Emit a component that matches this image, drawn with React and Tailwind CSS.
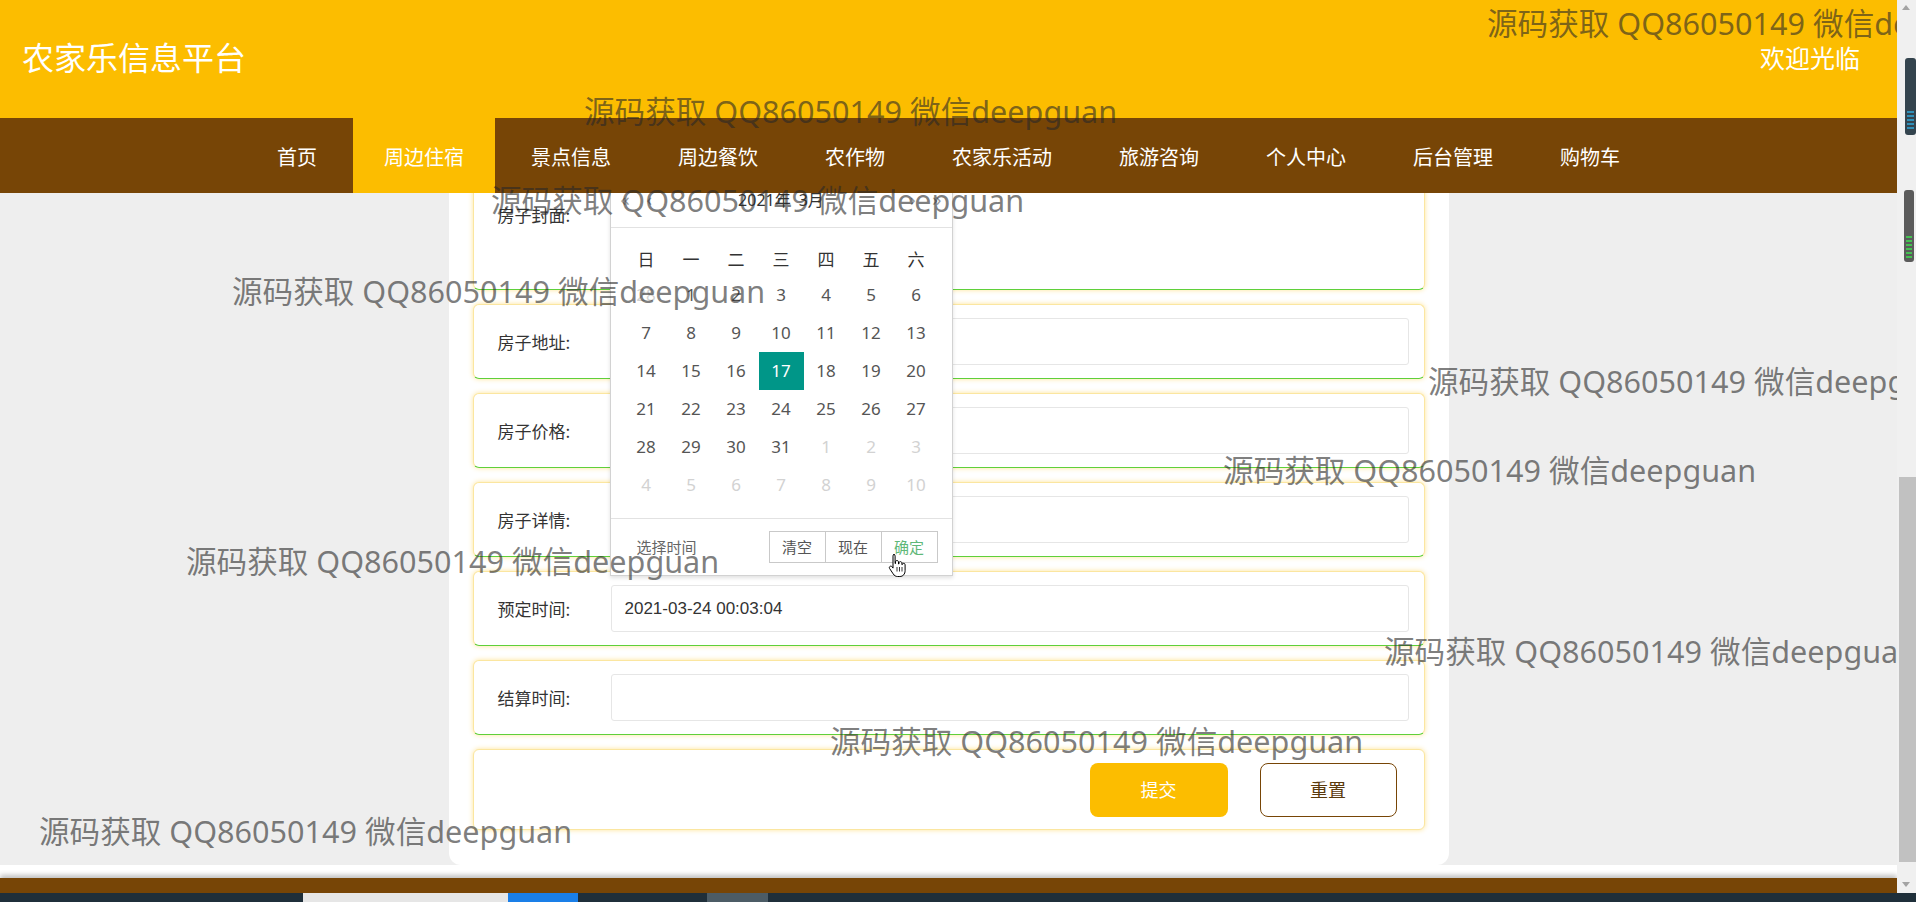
import React from "react";

const NAV = ["首页", "周边住宿", "景点信息", "周边餐饮", "农作物", "农家乐活动", "旅游咨询", "个人中心", "后台管理", "购物车"];

const WATERMARKS = [
  "left-[1487px] top-[5px]",
  "left-[584px] top-[93px]",
  "left-[491px] top-[182px]",
  "left-[232px] top-[273px]",
  "left-[1428px] top-[363px]",
  "left-[1223px] top-[452px]",
  "left-[186px] top-[543px]",
  "left-[1384px] top-[633px]",
  "left-[830px] top-[723px]",
  "left-[39px] top-[813px]",
];

const WEEK = ["日", "一", "二", "三", "四", "五", "六"];

// [day, muted]
const DAYS = [
  [[28, 1], [1], [2], [3], [4], [5], [6]],
  [[7], [8], [9], [10], [11], [12], [13]],
  [[14], [15], [16], [17], [18], [19], [20]],
  [[21], [22], [23], [24], [25], [26], [27]],
  [[28], [29], [30], [31], [1, 1], [2, 1], [3, 1]],
  [[4, 1], [5, 1], [6, 1], [7, 1], [8, 1], [9, 1], [10, 1]],
];

const rowBox =
  "flex items-center rounded-[6px] border border-[#fbe6a0] bg-white shadow-[0_0_5px_rgba(252,196,20,0.45)]";

function FieldRow({ label, value }) {
  return (
    <div className={`${rowBox} h-[75px] border-b-[#5fd03a] pl-[24px] pr-[15px]`}>
      <span className="w-[113px] shrink-0 text-[17px] leading-[24px] text-[#333]">{label}</span>
      <div className="flex h-[47px] flex-1 items-center rounded-[3px] border border-[#e6e6e6] bg-white pl-[13px] font-['Liberation_Sans',sans-serif] text-[17px] text-[#333]">
        {value}
      </div>
    </div>
  );
}

function HandCursor() {
  return (
    <svg width="18" height="25" viewBox="0 0 18 25" className="absolute left-[277px] top-[374px]">
      <path
        d="M5.5 1.5c.9 0 1.6.7 1.6 1.6v7.4h.4V9c0-.9.7-1.5 1.5-1.5s1.5.7 1.5 1.5v2h.4V10c0-.8.7-1.4 1.5-1.4s1.5.6 1.5 1.4v1.6h.4c0-.8.6-1.3 1.4-1.3.8 0 1.4.6 1.4 1.4v5.8c0 3.6-2.1 6-5.3 6H9.6c-2 0-3.3-.9-4.4-2.6l-3.6-5.4c-.5-.8-.3-1.7.4-2.1.7-.5 1.6-.3 2.1.4l.9 1.3V3.1c0-.9.6-1.6 1.5-1.6z"
        fill="#fff"
        stroke="#000"
        strokeWidth="1"
        strokeLinejoin="round"
      />
      <path d="M9 14v4.5M11.5 14v4.5M14 14v4.5" stroke="#000" strokeWidth="0.8" />
    </svg>
  );
}

function Calendar() {
  return (
    <div className="absolute left-[161px] top-[15px] w-[343px] border border-[#d2d2d2] bg-white font-['Noto_Sans','Noto_Sans_CJK_SC',sans-serif] shadow-[0_2px_4px_rgba(0,0,0,0.12)]">
      <div className="relative flex h-[49px] justify-center border-b border-[#e2e2e2] pt-[11px] text-[16px] leading-[20px] text-[#333]">
        <span className="absolute left-[10px] top-[10px] text-[18px] text-[#999]">«</span>
        <span className="absolute left-[36px] top-[10px] text-[18px] text-[#999]">‹</span>
        <span>2021年</span>
        <span className="ml-[8px]">3月</span>
        <span className="absolute right-[36px] top-[10px] text-[18px] text-[#999]">›</span>
        <span className="absolute right-[10px] top-[10px] text-[18px] text-[#999]">»</span>
      </div>
      <div className="px-[13px] pb-[14px] pt-[16px]">
        <div className="grid h-[32px] grid-cols-7 items-center text-center text-[17px] text-[#333]">
          {WEEK.map((w) => (
            <span key={w}>{w}</span>
          ))}
        </div>
        {DAYS.map((row, i) => (
          <div key={i} className="grid h-[38px] grid-cols-7 text-center text-[17px]">
            {row.map(([d, muted]) => (
              <span
                key={`${i}-${d}`}
                className={`flex items-center justify-center ${
                  d === 17 && !muted ? "bg-[#009688] text-white" : muted ? "text-[#d2d2d2]" : "text-[#555]"
                }`}
              >
                {d}
              </span>
            ))}
          </div>
        ))}
      </div>
      <div className="flex h-[57px] items-center justify-between border-t border-[#e2e2e2] pl-[26px] pr-[14px]">
        <span className="text-[15px] text-[#666]">选择时间</span>
        <div className="flex h-[32px] border border-[#c9c9c9] text-[15px]">
          <span className="flex w-[55px] items-center justify-center text-[#555]">清空</span>
          <span className="flex w-[56px] items-center justify-center border-l border-[#c9c9c9] text-[#555]">现在</span>
          <span className="flex w-[56px] items-center justify-center border-l border-[#c9c9c9] text-[#5fb878]">确定</span>
        </div>
      </div>
      <HandCursor />
    </div>
  );
}

function Scrollbar() {
  return (
    <div className="relative w-[19px] bg-[#f0f0f0]">
      <div className="absolute left-[5px] top-[5px] h-0 w-0 border-x-[4px] border-b-[5px] border-x-transparent border-b-[#a3a3a3]" />
      <div className="absolute left-[8px] top-[58px] flex h-[77px] w-[11px] flex-col justify-end gap-[2px] rounded-[3px] bg-[#34444e] px-[2px] pb-[6px]">
        <div className="h-[2px] bg-[#2f8fb8]" />
        <div className="h-[2px] bg-[#2f8fb8]" />
        <div className="h-[2px] bg-[#2f8fb8]" />
        <div className="h-[2px] bg-[#2f8fb8]" />
        <div className="h-[2px] bg-[#2f8fb8]" />
      </div>
      <div className="absolute left-[7px] top-[190px] flex h-[72px] w-[10px] flex-col justify-end gap-[2px] rounded-[3px] bg-[#5b5b5b] px-[2px] pb-[4px]">
        <div className="h-[2px] bg-[#45c152]" />
        <div className="h-[2px] bg-[#45c152]" />
        <div className="h-[2px] bg-[#45c152]" />
        <div className="h-[2px] bg-[#45c152]" />
        <div className="h-[2px] bg-[#45c152]" />
        <div className="h-[2px] bg-[#45c152]" />
      </div>
      <div className="absolute left-[2px] right-0 top-[477px] h-[385px] bg-[#c1c1c1]" />
      <div className="absolute bottom-[6px] left-[5px] h-0 w-0 border-x-[4px] border-t-[5px] border-x-transparent border-t-[#a3a3a3]" />
    </div>
  );
}

export default function App() {
  return (
    <div className="flex h-[902px] w-[1916px] flex-col overflow-hidden bg-white font-['Noto_Sans_CJK_SC',sans-serif]">
      <div className="flex h-[893px]">
        <div className="relative flex w-[1897px] flex-col overflow-hidden">
          <header className="flex h-[118px] shrink-0 items-center justify-between bg-[#fcbd00] pb-[6px] pl-[22px] pr-[37px] text-white">
            <h1 className="text-[32px] font-normal leading-none">农家乐信息平台</h1>
            <span className="pt-[2px] text-[25px] leading-none">欢迎光临</span>
          </header>

          <nav className="flex h-[75px] shrink-0 justify-center gap-[5px] bg-[#774506]">
            {NAV.map((item) => (
              <a
                key={item}
                className={`flex items-center px-[31px] pt-[3px] text-[20px] text-white ${
                  item === "周边住宿" ? "bg-[#fcbd00]" : ""
                }`}
              >
                {item}
              </a>
            ))}
          </nav>

          <main className="h-[672px] shrink-0 overflow-hidden bg-[#eeeeee]">
            <div className="relative mx-auto -mt-[30px] w-[1000px] rounded-b-[12px] bg-white px-[24px] pb-[35px]">
              <div className="flex flex-col gap-[14px]">
                <div className={`${rowBox} h-[127px] items-start border-b-[#5fd03a] pl-[24px]`}>
                  <span className="pt-[39px] text-[17px] leading-[24px] text-[#333]">房子封面:</span>
                </div>
                <FieldRow label="房子地址:" />
                <FieldRow label="房子价格:" />
                <FieldRow label="房子详情:" />
                <FieldRow label="预定时间:" value="2021-03-24 00:03:04" />
                <FieldRow label="结算时间:" />
                <div className={`${rowBox} h-[81px] justify-end gap-[32px] pr-[27px]`}>
                  <button className="h-[54px] w-[138px] rounded-[8px] bg-[#fcbd00] text-[18px] text-white">提交</button>
                  <button className="h-[54px] w-[137px] rounded-[8px] border border-[#774506] bg-white text-[18px] text-[#5b3a0c]">
                    重置
                  </button>
                </div>
              </div>
              <Calendar />
            </div>
          </main>

          <div className="h-[13px] shrink-0 bg-white" />
          <div className="h-[15px] shrink-0 bg-[#774506] shadow-[0_-3px_5px_rgba(0,0,0,0.25)]" />

          {WATERMARKS.map((pos) => (
            <span
              key={pos}
              className={`pointer-events-none absolute whitespace-nowrap font-['Noto_Sans','Noto_Sans_CJK_SC',sans-serif] text-[30.6px] leading-[36px] text-[rgba(40,40,40,0.6)] ${pos}`}
            >
              源码获取 QQ86050149 微信deepguan
            </span>
          ))}
        </div>
        <Scrollbar />
      </div>

      <div className="flex h-[9px] shrink-0 bg-[#1f2f3a]">
        <div className="ml-[303px] w-[205px] bg-[#e6e6e6]" />
        <div className="w-[70px] bg-[#1a7fe8]" />
        <div className="ml-[129px] w-[61px] bg-[#4c5c66]" />
      </div>
    </div>
  );
}
